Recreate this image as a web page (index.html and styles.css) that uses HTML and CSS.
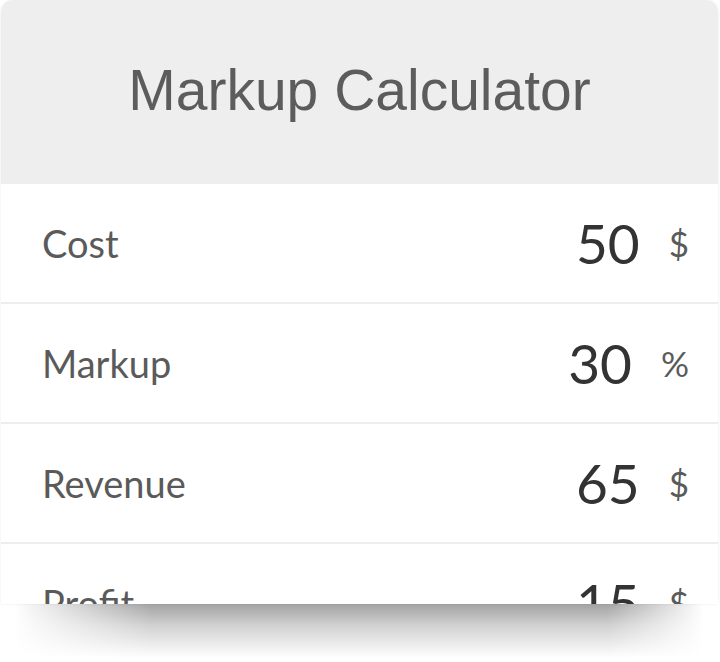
FILE: index.html
```html
<!DOCTYPE html>
<html>
<head>
  <meta charset="UTF-8">
  <meta name="viewport" content="width=device-width, initial-scale=1.0">
  <title>Markup Calculator</title>
  <link rel="stylesheet" href="styles.css">
</head>
<body>
  <div class="calculator">
    <h1 class="calc-title">Markup Calculator</h1>
    <div class="calc-row">
      <span class="row-label">Cost</span>
      <span class="row-value">50</span>
      <span class="row-unit">$</span>
    </div>
    <div class="calc-row">
      <span class="row-label">Markup</span>
      <span class="row-value">30</span>
      <span class="row-unit">%</span>
    </div>
    <div class="calc-row">
      <span class="row-label">Revenue</span>
      <span class="row-value">65</span>
      <span class="row-unit">$</span>
    </div>
    <div class="calc-row">
      <span class="row-label">Profit</span>
      <span class="row-value">15</span>
      <span class="row-unit">$</span>
    </div>
  </div>
  <div class="calc-shadow"></div>
</body>
</html>
```

FILE: styles.css
```css
:root {
  --header-bg: #eeeeee; --card-bg: #ffffff; --divider: #eeeeee;
  --title-color: #5c5c5c; --label-color: #5a5a5a; --value-color: #333333;
}
html { box-sizing: border-box; }
*, *:before, *:after { box-sizing: inherit; }
body { margin: 0; background: #ffffff; font-family: Lato, 'Noto Sans', sans-serif; }
.calculator {
  width: 717px; height: 604px; margin-left: 1px; overflow: hidden;
  background-color: var(--card-bg); border-radius: 12px 12px 0 0;
  box-shadow: 0 0 3px rgba(0, 0, 0, 0.08);
}
.calc-title {
  margin: 0; height: 184px; display: flex; align-items: center; justify-content: center;
  padding-bottom: 4px; background-color: var(--header-bg);
  font-family: 'Liberation Sans', Arial, sans-serif; font-weight: normal;
  font-size: 57px; color: var(--title-color);
}
.calc-row {
  height: 120px; display: flex; align-items: center; padding: 0 29px 0 41px;
  border-bottom: 2px solid var(--divider);
}
.row-label { flex: 1; font-size: 38px; color: var(--label-color); line-height: 1; }
.row-value { font-size: 55px; color: var(--value-color); line-height: 1; margin-right: 29px; }
.row-unit { font-size: 35px; color: var(--label-color); line-height: 1; }

/* soft drop shadow under the cut-off card */
.calc-shadow {
  width: 690px; height: 54px; margin-left: 14px;
  background: linear-gradient(to bottom, rgba(0, 0, 0, 0.36), rgba(0, 0, 0, 0.18) 40%, rgba(0, 0, 0, 0));
  -webkit-mask-image: linear-gradient(to right, transparent 0%, black 20%, black 86%, transparent 100%);
  mask-image: linear-gradient(to right, transparent 0%, black 20%, black 86%, transparent 100%);
}
```
